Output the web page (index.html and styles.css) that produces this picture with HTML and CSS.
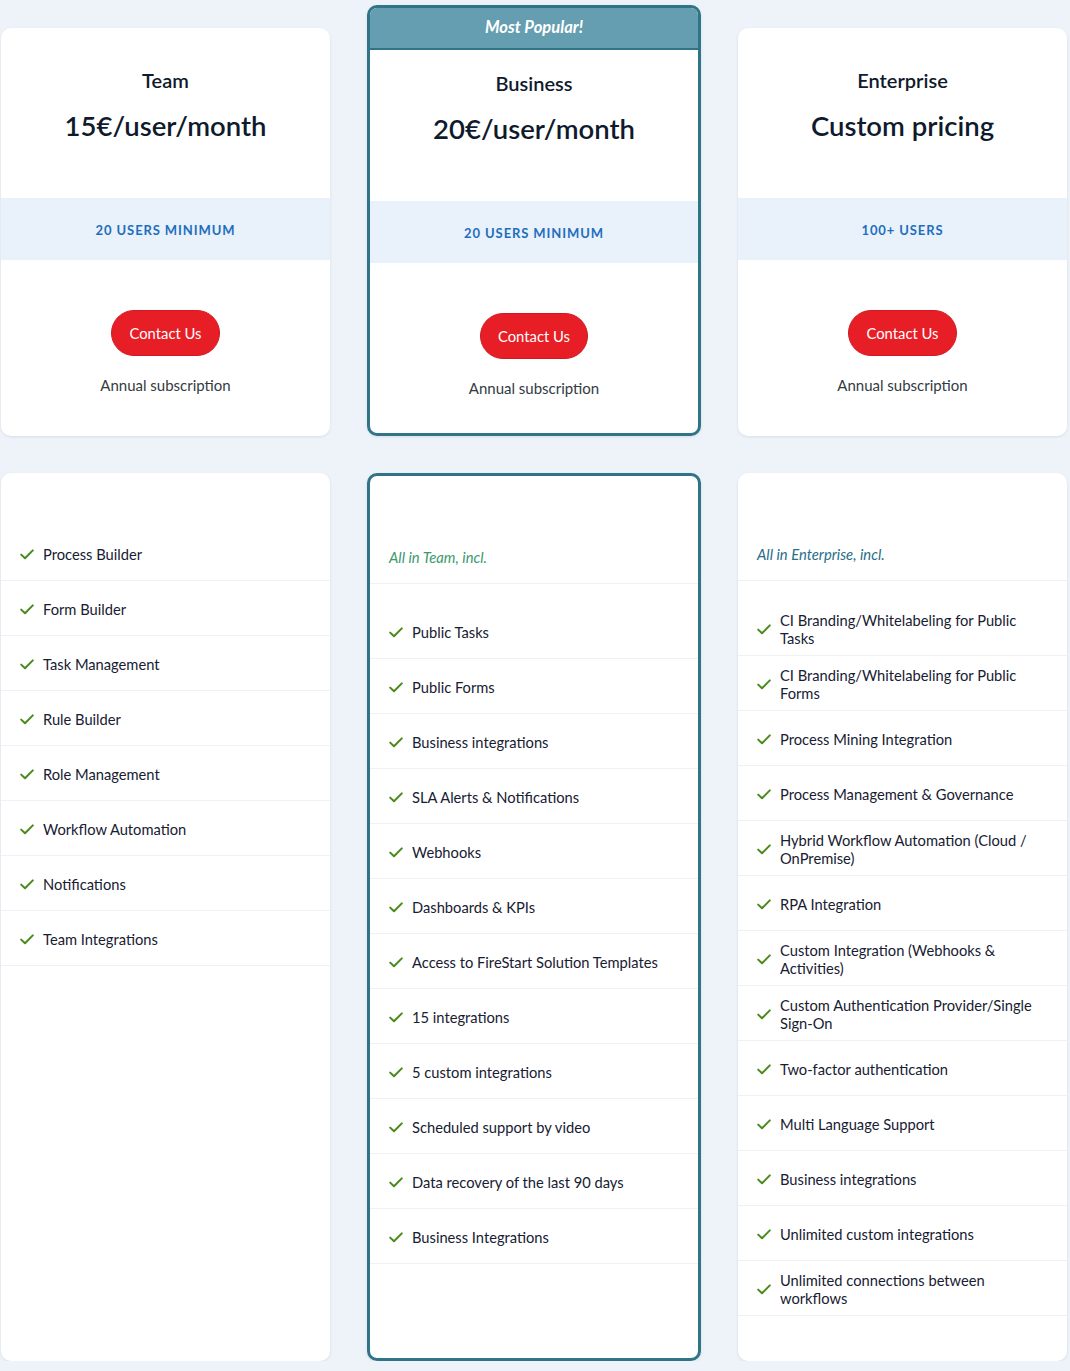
FILE: index.html
```html
<!DOCTYPE html>
<html lang="en">
<head>
<meta charset="utf-8">
<title>Pricing</title>
<link rel="stylesheet" href="styles.css">
</head>
<body>
<main class="pricing">
  <section class="plan-row plan-row--top">
    <div class="card plan">
      <div class="plan-body">
        <h2 class="plan-name">Team</h2>
        <div class="plan-price">15€/user/month</div>
        <div class="plan-band">20 USERS MINIMUM</div>
        <a class="btn" href="#">Contact Us</a>
        <div class="plan-note">Annual subscription</div>
      </div>
    </div>
    <div class="card card--featured plan">
      <div class="featured-head">Most Popular!</div>
      <div class="plan-body plan-body--featured">
        <h2 class="plan-name">Business</h2>
        <div class="plan-price">20€/user/month</div>
        <div class="plan-band">20 USERS MINIMUM</div>
        <a class="btn" href="#">Contact Us</a>
        <div class="plan-note">Annual subscription</div>
      </div>
    </div>
    <div class="card plan">
      <div class="plan-body">
        <h2 class="plan-name">Enterprise</h2>
        <div class="plan-price">Custom pricing</div>
        <div class="plan-band">100+ USERS</div>
        <a class="btn" href="#">Contact Us</a>
        <div class="plan-note">Annual subscription</div>
      </div>
    </div>
  </section>

  <section class="plan-row plan-row--features">
    <div class="card features">
      <ul class="feature-list feature-list--first">
        <li class="feature"><svg class="check" viewBox="0 0 14 11"><path d="M1.2 5.6 L5 9.3 L12.8 1.4"/></svg><span>Process Builder</span></li>
        <li class="feature"><svg class="check" viewBox="0 0 14 11"><path d="M1.2 5.6 L5 9.3 L12.8 1.4"/></svg><span>Form Builder</span></li>
        <li class="feature"><svg class="check" viewBox="0 0 14 11"><path d="M1.2 5.6 L5 9.3 L12.8 1.4"/></svg><span>Task Management</span></li>
        <li class="feature"><svg class="check" viewBox="0 0 14 11"><path d="M1.2 5.6 L5 9.3 L12.8 1.4"/></svg><span>Rule Builder</span></li>
        <li class="feature"><svg class="check" viewBox="0 0 14 11"><path d="M1.2 5.6 L5 9.3 L12.8 1.4"/></svg><span>Role Management</span></li>
        <li class="feature"><svg class="check" viewBox="0 0 14 11"><path d="M1.2 5.6 L5 9.3 L12.8 1.4"/></svg><span>Workflow Automation</span></li>
        <li class="feature"><svg class="check" viewBox="0 0 14 11"><path d="M1.2 5.6 L5 9.3 L12.8 1.4"/></svg><span>Notifications</span></li>
        <li class="feature"><svg class="check" viewBox="0 0 14 11"><path d="M1.2 5.6 L5 9.3 L12.8 1.4"/></svg><span>Team Integrations</span></li>
      </ul>
    </div>
    <div class="card card--featured features">
      <div class="feature-head feature-head--green">All in Team, incl.</div>
      <ul class="feature-list">
        <li class="feature"><svg class="check" viewBox="0 0 14 11"><path d="M1.2 5.6 L5 9.3 L12.8 1.4"/></svg><span>Public Tasks</span></li>
        <li class="feature"><svg class="check" viewBox="0 0 14 11"><path d="M1.2 5.6 L5 9.3 L12.8 1.4"/></svg><span>Public Forms</span></li>
        <li class="feature"><svg class="check" viewBox="0 0 14 11"><path d="M1.2 5.6 L5 9.3 L12.8 1.4"/></svg><span>Business integrations</span></li>
        <li class="feature"><svg class="check" viewBox="0 0 14 11"><path d="M1.2 5.6 L5 9.3 L12.8 1.4"/></svg><span>SLA Alerts &amp; Notifications</span></li>
        <li class="feature"><svg class="check" viewBox="0 0 14 11"><path d="M1.2 5.6 L5 9.3 L12.8 1.4"/></svg><span>Webhooks</span></li>
        <li class="feature"><svg class="check" viewBox="0 0 14 11"><path d="M1.2 5.6 L5 9.3 L12.8 1.4"/></svg><span>Dashboards &amp; KPIs</span></li>
        <li class="feature"><svg class="check" viewBox="0 0 14 11"><path d="M1.2 5.6 L5 9.3 L12.8 1.4"/></svg><span>Access to FireStart Solution Templates</span></li>
        <li class="feature"><svg class="check" viewBox="0 0 14 11"><path d="M1.2 5.6 L5 9.3 L12.8 1.4"/></svg><span>15 integrations</span></li>
        <li class="feature"><svg class="check" viewBox="0 0 14 11"><path d="M1.2 5.6 L5 9.3 L12.8 1.4"/></svg><span>5 custom integrations</span></li>
        <li class="feature"><svg class="check" viewBox="0 0 14 11"><path d="M1.2 5.6 L5 9.3 L12.8 1.4"/></svg><span>Scheduled support by video</span></li>
        <li class="feature"><svg class="check" viewBox="0 0 14 11"><path d="M1.2 5.6 L5 9.3 L12.8 1.4"/></svg><span>Data recovery of the last 90 days</span></li>
        <li class="feature"><svg class="check" viewBox="0 0 14 11"><path d="M1.2 5.6 L5 9.3 L12.8 1.4"/></svg><span>Business Integrations</span></li>
      </ul>
    </div>
    <div class="card features">
      <div class="feature-head feature-head--teal">All in Enterprise, incl.</div>
      <ul class="feature-list">
        <li class="feature"><svg class="check" viewBox="0 0 14 11"><path d="M1.2 5.6 L5 9.3 L12.8 1.4"/></svg><span>CI Branding/Whitelabeling for Public Tasks</span></li>
        <li class="feature"><svg class="check" viewBox="0 0 14 11"><path d="M1.2 5.6 L5 9.3 L12.8 1.4"/></svg><span>CI Branding/Whitelabeling for Public Forms</span></li>
        <li class="feature"><svg class="check" viewBox="0 0 14 11"><path d="M1.2 5.6 L5 9.3 L12.8 1.4"/></svg><span>Process Mining Integration</span></li>
        <li class="feature"><svg class="check" viewBox="0 0 14 11"><path d="M1.2 5.6 L5 9.3 L12.8 1.4"/></svg><span>Process Management &amp; Governance</span></li>
        <li class="feature"><svg class="check" viewBox="0 0 14 11"><path d="M1.2 5.6 L5 9.3 L12.8 1.4"/></svg><span>Hybrid Workflow Automation (Cloud / OnPremise)</span></li>
        <li class="feature"><svg class="check" viewBox="0 0 14 11"><path d="M1.2 5.6 L5 9.3 L12.8 1.4"/></svg><span>RPA Integration</span></li>
        <li class="feature"><svg class="check" viewBox="0 0 14 11"><path d="M1.2 5.6 L5 9.3 L12.8 1.4"/></svg><span>Custom Integration (Webhooks &amp; Activities)</span></li>
        <li class="feature"><svg class="check" viewBox="0 0 14 11"><path d="M1.2 5.6 L5 9.3 L12.8 1.4"/></svg><span>Custom Authentication Provider/Single Sign-On</span></li>
        <li class="feature"><svg class="check" viewBox="0 0 14 11"><path d="M1.2 5.6 L5 9.3 L12.8 1.4"/></svg><span>Two-factor authentication</span></li>
        <li class="feature"><svg class="check" viewBox="0 0 14 11"><path d="M1.2 5.6 L5 9.3 L12.8 1.4"/></svg><span>Multi Language Support</span></li>
        <li class="feature"><svg class="check" viewBox="0 0 14 11"><path d="M1.2 5.6 L5 9.3 L12.8 1.4"/></svg><span>Business integrations</span></li>
        <li class="feature"><svg class="check" viewBox="0 0 14 11"><path d="M1.2 5.6 L5 9.3 L12.8 1.4"/></svg><span>Unlimited custom integrations</span></li>
        <li class="feature"><svg class="check" viewBox="0 0 14 11"><path d="M1.2 5.6 L5 9.3 L12.8 1.4"/></svg><span>Unlimited connections between workflows</span></li>
      </ul>
    </div>
  </section>
</main>
</body>
</html>
```
FILE: styles.css
```css
* { box-sizing: border-box; }

html, body {
  margin: 0;
  padding: 0;
  background: #eef3f9;
  font-family: Lato, "Open Sans", "Liberation Sans", sans-serif;
  color: #121c2c;
}

.pricing {
  padding: 5px 0 0 1px;
  width: 1070px;
}

.plan-row {
  display: grid;
  grid-template-columns: 329px 334px 329px;
  column-gap: 37px;
}

.plan-row--top {
  align-items: end;
}

.plan-row--features {
  margin-top: 37px;
  align-items: stretch;
}

.card {
  background: #ffffff;
  border-radius: 10px;
  box-shadow: 0 1px 3px rgba(30, 50, 80, 0.10);
  overflow: hidden;
}

.card--featured {
  border: 3px solid #2f7587;
  border-radius: 10px;
}

/* ---- top plan cards ---- */
.plan-body {
  display: flex;
  flex-direction: column;
  align-items: center;
  padding: 38px 0 41px;
  text-align: center;
}

.plan-body--featured {
  padding: 19px 0 35px;
}

.featured-head {
  height: 42px;
  background: #659eb0;
  border-bottom: 2px solid #2f7587;
  color: #ffffff;
  font-size: 16.6px;
  font-weight: 700;
  font-style: italic;
  display: flex;
  align-items: center;
  justify-content: center;
  padding-bottom: 2px;
}

.plan-name {
  margin: 0;
  font-size: 20px;
  line-height: 28px;
  font-weight: 600;
  color: #0f1a2c;
}

.plan-price {
  margin-top: 14px;
  font-size: 27.5px;
  line-height: 36px;
  font-weight: 600;
  color: #0f1a2c;
}

.plan-band {
  margin-top: 54px;
  align-self: stretch;
  height: 62px;
  background: #e9f1fa;
  color: #1e6ebe;
  font-size: 13px;
  font-weight: 700;
  letter-spacing: 0.9px;
  display: flex;
  align-items: center;
  justify-content: center;
  padding-top: 2px;
}

.btn {
  margin-top: 50px;
  height: 46px;
  padding: 0 17px;
  border-radius: 23px;
  background: #e81e26;
  border: 1px solid #cf1a21;
  color: #ffffff;
  font-size: 14.8px;
  text-decoration: none;
  display: flex;
  align-items: center;
  justify-content: center;
}

.plan-note {
  margin-top: 19px;
  font-size: 15px;
  line-height: 20px;
  color: #343a42;
}

/* ---- feature cards ---- */
.features {
  padding: 53px 0 45px;
}

.feature-head {
  height: 55px;
  border-bottom: 1px solid #eef1f5;
  padding: 2px 24px 0 19px;
  display: flex;
  align-items: center;
  font-size: 14.8px;
  font-style: italic;
}

.feature-head--green { color: #3c9a6b; }
.feature-head--teal { color: #2a6e89; }

.feature-list {
  list-style: none;
  margin: 0;
  padding: 20px 0 0;
}

.feature-list--first {
  padding-top: 0;
}

.feature {
  height: 55px;
  border-bottom: 1px solid #eef1f5;
  display: flex;
  align-items: center;
  gap: 9px;
  padding: 2px 22px 0 19px;
  font-size: 14.7px;
  line-height: 18px;
  color: #172032;
}

.check {
  flex: 0 0 14px;
  width: 14px;
  height: 11px;
  fill: none;
  stroke: #4a8a1c;
  stroke-width: 2;
  stroke-linecap: round;
  stroke-linejoin: round;
}
```
